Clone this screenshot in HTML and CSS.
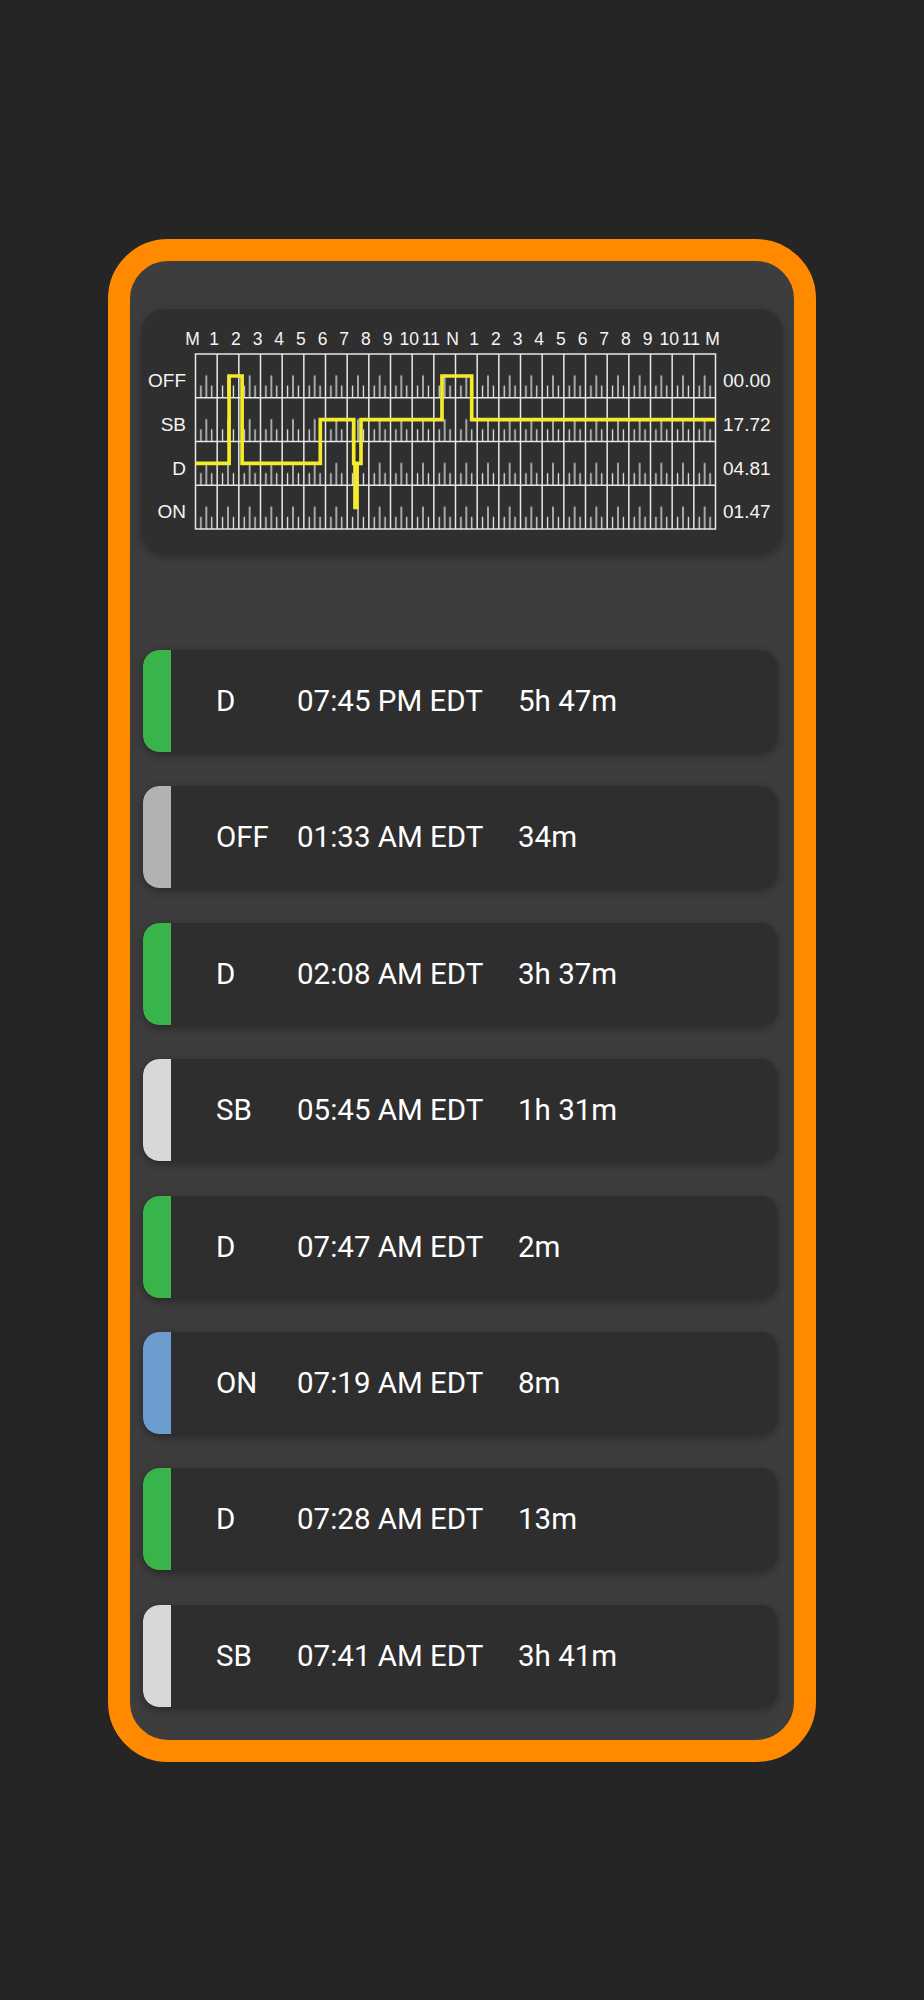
FILE: index.html
```html
<!DOCTYPE html>
<html lang="en">
<head>
<meta charset="utf-8">
<title>Log</title>
<link rel="stylesheet" href="styles.css">
</head>
<body>
<div class="frame">
  <div class="panel">
    <section class="chart-card">
      <svg class="chart" width="640" height="244" viewBox="0 0 640 244">
        <defs>
          <pattern id="ticks" x="53.5" y="45" width="21.6667" height="43.75" patternUnits="userSpaceOnUse">
            <path class="tick" d="M5.42 43.75V31.5M10.83 43.75V21.5M16.25 43.75V31.5"/>
          </pattern>
        </defs>
        <g class="hours">
          <text x="50.5" y="36">M</text><text x="72.2" y="36">1</text><text x="93.8" y="36">2</text><text x="115.5" y="36">3</text><text x="137.2" y="36">4</text><text x="158.8" y="36">5</text><text x="180.5" y="36">6</text><text x="202.2" y="36">7</text><text x="223.8" y="36">8</text><text x="245.5" y="36">9</text><text x="267.2" y="36">10</text><text x="288.8" y="36">11</text><text x="310.5" y="36">N</text><text x="332.2" y="36">1</text><text x="353.8" y="36">2</text><text x="375.5" y="36">3</text><text x="397.2" y="36">4</text><text x="418.8" y="36">5</text><text x="440.5" y="36">6</text><text x="462.2" y="36">7</text><text x="483.8" y="36">8</text><text x="505.5" y="36">9</text><text x="527.2" y="36">10</text><text x="548.8" y="36">11</text><text x="570.5" y="36">M</text>
        </g>
        <g class="rowlabels">
          <text x="44" y="78">OFF</text><text x="44" y="121.8">SB</text><text x="44" y="165.5">D</text><text x="44" y="209.3">ON</text>
        </g>
        <g class="values">
          <text x="581" y="78">00.00</text><text x="581" y="121.8">17.72</text><text x="581" y="165.5">04.81</text><text x="581" y="209.3">01.47</text>
        </g>
        <rect class="tick-field" x="53.5" y="45" width="520" height="175"/>
        <path class="grid" d="M75.17 45V220M96.83 45V220M118.5 45V220M140.17 45V220M161.83 45V220M183.5 45V220M205.17 45V220M226.83 45V220M248.5 45V220M270.17 45V220M291.83 45V220M313.5 45V220M335.17 45V220M356.83 45V220M378.5 45V220M400.17 45V220M421.83 45V220M443.5 45V220M465.17 45V220M486.83 45V220M508.5 45V220M530.17 45V220M551.83 45V220M53.5 88.75H573.5M53.5 132.5H573.5M53.5 176.25H573.5"/>
        <rect class="grid" x="53.5" y="45" width="520" height="175"/>
        <path class="trace" d="M53.5 154.4H87.1V67H100.1V154.4H178.3V110.6H211.7V154.4H213V198.5H215V154.4H219V110.6H300V67H329.7V110.6H573.5"/>
      </svg>
    </section>

    <ul class="log">
      <li class="entry"><span class="stripe drive"></span><span class="status">D</span><span class="time">07:45 PM EDT</span><span class="dur">5h 47m</span></li>
      <li class="entry"><span class="stripe off"></span><span class="status">OFF</span><span class="time">01:33 AM EDT</span><span class="dur">34m</span></li>
      <li class="entry"><span class="stripe drive"></span><span class="status">D</span><span class="time">02:08 AM EDT</span><span class="dur">3h 37m</span></li>
      <li class="entry"><span class="stripe sleep"></span><span class="status">SB</span><span class="time">05:45 AM EDT</span><span class="dur">1h 31m</span></li>
      <li class="entry"><span class="stripe drive"></span><span class="status">D</span><span class="time">07:47 AM EDT</span><span class="dur">2m</span></li>
      <li class="entry"><span class="stripe on"></span><span class="status">ON</span><span class="time">07:19 AM EDT</span><span class="dur">8m</span></li>
      <li class="entry"><span class="stripe drive"></span><span class="status">D</span><span class="time">07:28 AM EDT</span><span class="dur">13m</span></li>
      <li class="entry"><span class="stripe sleep"></span><span class="status">SB</span><span class="time">07:41 AM EDT</span><span class="dur">3h 41m</span></li>
    </ul>
  </div>
</div>
</body>
</html>
```
FILE: styles.css
```css
* { box-sizing: border-box; }

html, body {
  margin: 0;
  padding: 0;
  background: #252525;
}

body {
  font-family: Roboto, "Liberation Sans", sans-serif;
  color: #ffffff;
  padding-top: 239px;
}

.frame {
  width: 708px;
  margin-left: 108px;
  border: 22px solid #ff8a00;
  border-radius: 60px;
  background: #3d3d3d;
  overflow: hidden;
}

.panel {
  padding: 48px 12px 33px 12px;
}

.chart-card {
  width: 640px;
  height: 244px;
  background: #2f2f2f;
  border-radius: 22px;
  box-shadow: 0 3px 10px rgba(0, 0, 0, 0.35);
}

.chart {
  display: block;
  font-family: "Liberation Sans", Arial, sans-serif;
}

.hours text {
  font-size: 17.5px;
  fill: #f4f4f4;
  text-anchor: middle;
}

.rowlabels text {
  font-size: 19px;
  fill: #f4f4f4;
  text-anchor: end;
}

.values text {
  font-size: 19px;
  fill: #f4f4f4;
}

.tick {
  stroke: #e6e6e6;
  stroke-width: 1.3;
  fill: none;
}

.tick-field {
  fill: url(#ticks);
}

.grid {
  stroke: #e8e8e8;
  stroke-width: 1.5;
  fill: none;
}

.trace {
  stroke: #f3eb2c;
  stroke-width: 3.7;
  fill: none;
  stroke-linejoin: miter;
}

.log {
  list-style: none;
  margin: 97px 0 0 0;
  padding: 0 5px 0 1px;
  display: flex;
  flex-direction: column;
  gap: 34.4px;
}

.entry {
  height: 102px;
  display: flex;
  align-items: center;
  background: #2e2e2e;
  border-radius: 16px;
  box-shadow: 0 3px 10px rgba(0, 0, 0, 0.35);
  font-size: 29.5px;
  overflow: hidden;
}

.stripe {
  align-self: stretch;
  width: 28px;
  flex: none;
  margin-right: 45px;
  border-radius: 16px 0 0 16px;
}

.stripe.drive { background: #39b44a; }
.stripe.off { background: #b2b2b2; }
.stripe.sleep { background: #d8d8d8; }
.stripe.on { background: #6d9ccf; }

.status {
  width: 81px;
  flex: none;
}

.time {
  width: 221px;
  flex: none;
}
```
